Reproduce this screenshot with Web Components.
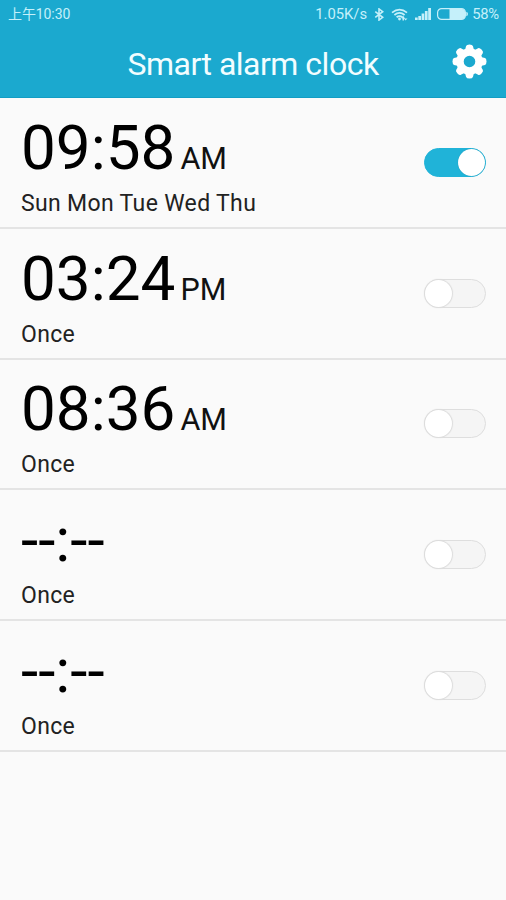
<!DOCTYPE html>
<html lang="en">
<head>
<meta charset="utf-8">
<title>Smart alarm clock</title>
<style>
  html, body {
    margin: 0;
    height: 100%;
    overflow: hidden;
    background: #fafafa;
    font-family: Roboto, "Noto Sans CJK SC", sans-serif;
  }
</style>
</head>
<body>
<alarm-app></alarm-app>

<script>
/**
 * Small helper shared by every component: opens the shadow root
 * and clones the template of the element into it
 */
class BaseElement extends HTMLElement {

  connectedCallback() {
    if (this.shadowRoot) return;
    const template = document.createElement('template');
    template.innerHTML = this.style_ + this.markup;
    this.attachShadow({ mode: 'open' });
    this.shadowRoot.appendChild(template.content.cloneNode(true));
    this.addListeners();
  }

  addListeners() {}
}

/**
 * Phone status bar
 * @tag <status-bar></status-bar>
 */
class StatusBar extends BaseElement {

  get style_() {
    return `
      <style>
        :host {
          display: flex;
          justify-content: space-between;
          align-items: center;
          height: 28px;
          padding: 0 7px 0 8px;
          color: #c5f0fa;
          font-size: 14.8px;
          line-height: 16px;
        }
        .clock { font-size: 14px; letter-spacing: -.1px; }
        .icons { display: flex; align-items: center; }
        svg { display: block; fill: currentColor; }
        .speed { margin-right: 7px; }
        .bluetooth { margin-right: 7px; }
        .wifi { margin-right: 7px; }
        .signal { margin-right: 6px; }
        .battery { margin-right: 4px; }
        .percent { letter-spacing: -.2px; }
      </style>
    `;
  }

  get markup() {
    return `
      <span class="clock">上午10:30</span>
      <div class="icons">
        <span class="speed">1.05K/s</span>
        <svg class="bluetooth" width="10" height="13" viewBox="0 0 10 14">
          <path d="M1 4l8 6-4 3V1l4 3-8 6" fill="none" stroke="currentColor" stroke-width="1.7"/>
        </svg>
        <svg class="wifi" width="17" height="13" viewBox="0 0 17 13">
          <path d="M1 4.6Q8.500-1.400 16 4.600M3.400 7Q8.500 2.800 13.600 7M5.600 9.300Q8.500 7 11.400 9.300" fill="none" stroke="currentColor" stroke-width="1.800"/>
          <circle cx="8.500" cy="11" r="1.400"/>
          <path d="M12 7.500l2 3h-1v2h-1.500v-2h-1zM14.500 12.500l-1.500-2h3.500z"/>
        </svg>
        <svg class="signal" width="16" height="12" viewBox="0 0 16 12">
          <path d="M0 9.500h2.700V12H0zM3.300 8h2.700v4H3.300zM6.600 5.500h2.700V12H6.600zM9.900 3h2.700v9H9.900zM13.200 0H16v12h-2.800z"/>
        </svg>
        <svg class="battery" width="31" height="12" viewBox="0 0 31 12">
          <rect x=".6" y=".6" width="27.800" height="10.800" rx="4" fill="none" stroke="currentColor" stroke-width="1.200"/>
          <path d="M12.500 1H25a3 3 0 0 1 3 3v4a3 3 0 0 1-3 3H12.500zM29.300 3.800q1.700.2 1.700 2.200t-1.700 2.200z"/>
        </svg>
        <span class="percent">58%</span>
      </div>
    `;
  }
}

/**
 * Title bar, the title comes from the default slot
 * @tag <title-bar></title-bar>
 */
class TitleBar extends BaseElement {

  get style_() {
    return `
      <style>
        :host {
          display: grid;
          grid-template-columns: 1fr auto 1fr;
          align-items: center;
          height: 70px;
          padding: 0 19px;
          box-sizing: border-box;
          border-bottom: 1px solid #129dc4;
          color: #f2fdff;
        }
        h1 {
          grid-column: 2;
          margin: 2px 0 0;
          font-size: 32px;
          font-weight: 400;
          line-height: 40px;
          letter-spacing: -.5px;
          white-space: nowrap;
        }
        button {
          justify-self: end;
          margin: 0 0 2px;
          padding: 0;
          border: 0;
          background: none;
          color: #fff;
        }
        svg { display: block; }
      </style>
    `;
  }

  get markup() {
    // one tooth is drawn and rotated eight times
    const teeth = [0, 45, 90, 135, 180, 225, 270, 315]
      .map(angle => `<path d="M-4.600-11L-3.400-15.500Q-2.900-17 0-17T3.400-15.500L4.600-11z" transform="rotate(${angle})"/>`)
      .join('');

    return `
      <h1><slot></slot></h1>
      <button aria-label="Settings">
        <svg width="35" height="35" viewBox="-17.500 -17.500 35 35" fill="currentColor">
          ${teeth}
          <circle r="9.500" fill="none" stroke="currentColor" stroke-width="7.400"/>
        </svg>
      </button>
    `;
  }
}

/**
 * On / off switch
 * @tag <toggle-switch on></toggle-switch>
 */
class ToggleSwitch extends BaseElement {

  addListeners() {
    this.addEventListener('click', () => this.toggleAttribute('on'));
  }

  get style_() {
    return `
      <style>
        :host {
          display: flex;
          box-sizing: border-box;
          width: 62px;
          height: 29px;
          border: 1px solid #dedede;
          border-radius: 15px;
          background: #f5f5f5;
        }
        :host([on]) {
          justify-content: flex-end;
          border-color: #20b3d8;
          background: #20b3d8;
        }
        .knob {
          width: 27px;
          height: 27px;
          border-radius: 50%;
          background: #fff;
          box-shadow: 0 0 1px 1px #dcdcdc;
        }
        :host([on]) .knob { box-shadow: 0 0 1px #168fae; }
      </style>
    `;
  }

  get markup() {
    return `<div class="knob"></div>`;
  }
}

/**
 * One alarm of the list
 * @tag <alarm-row time="09:58" period="AM" on>Once</alarm-row>
 */
class AlarmRow extends BaseElement {

  get style_() {
    return `
      <style>
        :host {
          display: flex;
          justify-content: space-between;
          align-items: center;
          box-sizing: border-box;
          height: 130.8px;
          padding: 0 20px 0 21px;
          border-bottom: 2px solid #e4e4e4;
          color: #000;
        }
        .alarm { padding-top: 5px; }
        .time {
          display: flex;
          align-items: baseline;
          gap: 5px;
          height: 72px;
          font-size: 62px;
          line-height: 72px;
        }
        .period { font-size: 30.5px; color: #111; }
        .repeat {
          margin-top: 6px;
          font-size: 23px;
          line-height: 28px;
          letter-spacing: .34px;
          color: #222;
        }
      </style>
    `;
  }

  get markup() {
    const period = this.getAttribute('period');
    return `
      <div class="alarm">
        <div class="time">
          <span>${this.getAttribute('time')}</span>
          ${period ? `<span class="period">${period}</span>` : ''}
        </div>
        <div class="repeat"><slot></slot></div>
      </div>
      <toggle-switch ${this.hasAttribute('on') ? 'on' : ''}></toggle-switch>
    `;
  }
}

/**
 * The whole screen
 * @tag <alarm-app></alarm-app>
 */
class AlarmApp extends BaseElement {

  get style_() {
    return `
      <style>
        :host { display: block; height: 100%; }
        header { background: #1ba9cf; }
      </style>
    `;
  }

  get markup() {
    return `
      <header>
        <status-bar></status-bar>
        <title-bar>Smart alarm clock</title-bar>
      </header>
      <main>
        <alarm-row time="09:58" period="AM" on>Sun Mon Tue Wed Thu</alarm-row>
        <alarm-row time="03:24" period="PM">Once</alarm-row>
        <alarm-row time="08:36" period="AM">Once</alarm-row>
        <alarm-row time="--:--">Once</alarm-row>
        <alarm-row time="--:--">Once</alarm-row>
      </main>
    `;
  }
}

window.customElements.define('status-bar', StatusBar);
window.customElements.define('title-bar', TitleBar);
window.customElements.define('toggle-switch', ToggleSwitch);
window.customElements.define('alarm-row', AlarmRow);
window.customElements.define('alarm-app', AlarmApp);
</script>
</body>
</html>
